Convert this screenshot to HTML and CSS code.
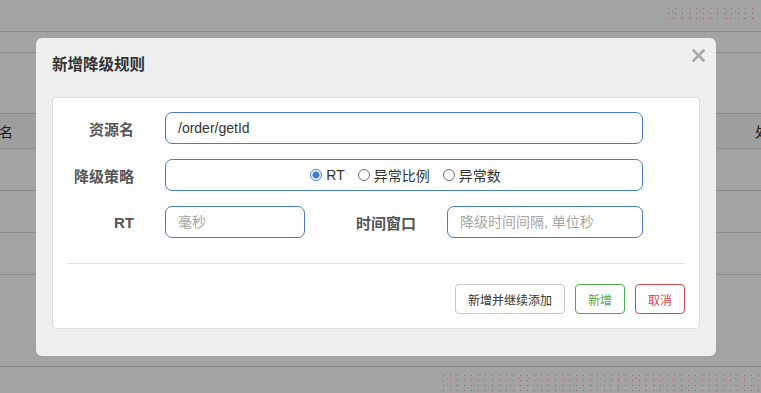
FILE: index.html
```html
<!DOCTYPE html>
<html lang="zh-CN">
<head>
<meta charset="utf-8">
<title>新增降级规则</title>
<link rel="stylesheet" href="styles.css">
</head>
<body>
<div class="page">
  <div class="bar1"><span class="wm wm-top"></span></div>
  <div class="bar2"></div>
  <div class="spacer"></div>
  <div class="thead">
    <span class="th th-first">资源名</span>
    <span class="th th-last">处理</span>
  </div>
  <div class="trow"></div>
  <div class="trow"></div>
  <div class="trow"></div>
  <div class="trow trow-tall"></div>
  <div class="footer"><span class="wm wm-bottom"></span></div>
</div>

<div class="backdrop"></div>

<div class="modal">
  <button class="close" aria-label="关闭">
    <svg width="13" height="13" viewBox="0 0 13 13"><path d="M1.5 1.5 L11.5 11.5 M11.5 1.5 L1.5 11.5" stroke="#a8a8a8" stroke-width="2.6" stroke-linecap="square" fill="none"/></svg>
  </button>
  <h3 class="title">新增降级规则</h3>
  <div class="panel">
    <div class="row">
      <label class="lbl">资源名</label>
      <div class="field field-wide"><input class="inp" type="text" value="/order/getId"></div>
    </div>
    <div class="row">
      <label class="lbl">降级策略</label>
      <div class="field field-wide radios">
        <span class="radio-item"><span class="radio checked"></span>RT</span>
        <span class="radio-item"><span class="radio"></span>异常比例</span>
        <span class="radio-item"><span class="radio"></span>异常数</span>
      </div>
    </div>
    <div class="row">
      <label class="lbl">RT</label>
      <div class="field field-short"><input class="inp" type="text" placeholder="毫秒"></div>
      <label class="lbl lbl-mid">时间窗口</label>
      <div class="field field-mid"><input class="inp" type="text" placeholder="降级时间间隔, 单位秒"></div>
    </div>
    <div class="sep"></div>
    <div class="actions">
      <button class="btn">新增并继续添加</button>
      <button class="btn btn-green">新增</button>
      <button class="btn btn-red">取消</button>
    </div>
  </div>
</div>
</body>
</html>
```

FILE: styles.css
```css
* { box-sizing: border-box; }
html, body { margin: 0; padding: 0; }
body {
  width: 761px;
  height: 393px;
  overflow: hidden;
  background: #ffffff;
  font-family: "Liberation Sans", "Noto Sans CJK SC", sans-serif;
  color: #333;
}

.page { width: 761px; }
.bar1 {
  height: 32px;
  border-bottom: 1px solid #dcdcdc;
  display: flex;
  justify-content: flex-end;
  padding: 6px 6px 0 0;
}
.bar2 { height: 21px; border-bottom: 1px solid #dcdcdc; }
.spacer { height: 60px; }
.thead {
  height: 36px;
  border-top: 1px solid #dcdcdc;
  border-bottom: 1px solid #dcdcdc;
  background: #f4f7fb;
  display: flex;
  align-items: center;
  font-size: 14px;
  font-family: "Noto Sans CJK SC", sans-serif;
  color: #333;
}
.th { white-space: nowrap; }
.th-first { margin-left: -29px; }
.th-last { margin-left: auto; width: 6px; overflow: visible; }
.trow { height: 42px; border-bottom: 1px solid #dcdcdc; }
.trow-tall { height: 92px; }
.footer {
  height: 27px;
  display: flex;
  justify-content: flex-end;
  padding-top: 6px;
}

.wm {
  display: block;
  background-image:
    radial-gradient(circle, rgba(255, 80, 80, 0.55) 0.7px, transparent 1px),
    radial-gradient(circle, rgba(255, 80, 80, 0.45) 0.7px, transparent 1px);
  background-size: 7px 5px, 9px 7px;
  background-position: 0 0, 3px 2px;
}
.wm-top { width: 90px; height: 14px; }
.wm-bottom { width: 321px; height: 18px; }

.backdrop {
  position: fixed;
  inset: 0;
  background: rgba(0, 0, 0, 0.36);
}

.modal {
  position: fixed;
  left: 36px;
  top: 38px;
  width: 680px;
  background: #efefef;
  border-radius: 6px;
  padding: 15px 16px 27px 16px;
}
.close {
  position: absolute;
  right: 11px;
  top: 11px;
  width: 13px;
  height: 13px;
  padding: 0;
  border: 0;
  background: transparent;
  display: flex;
}
.title {
  margin: 0 0 24px 0;
  font-size: 15.5px;
  line-height: 20px;
  font-weight: 700;
  color: #333;
  font-family: "Noto Sans CJK SC", sans-serif;
}

.panel {
  background: #fff;
  border: 1px solid #dcdcdc;
  border-radius: 4px;
  padding: 14px 14px 14px 14px;
  display: flex;
  flex-direction: column;
}
.row {
  display: flex;
  align-items: center;
  height: 32px;
  margin-bottom: 15px;
}
.row:nth-child(3) { margin-bottom: 0; }
.lbl {
  width: 67px;
  text-align: right;
  font-size: 15px;
  font-weight: 700;
  color: #555;
  font-family: "Liberation Sans", "Noto Sans CJK SC", sans-serif;
  margin-right: 31px;
  flex: none;
}
.lbl-mid { width: 111px; }
.field { height: 32px; flex: none; }
.field-wide { width: 478px; }
.field-short { width: 140px; }
.field-mid { width: 196px; }

.inp {
  width: 100%;
  height: 32px;
  border: 1px solid #4a7dbd;
  border-radius: 7px;
  padding: 0 12px;
  font-size: 14px;
  font-family: "Liberation Sans", "Noto Sans CJK SC", sans-serif;
  color: #333;
  outline: none;
  background: #fff;
}
.inp::placeholder { color: #a5a5a5; }

.radios {
  border: 1px solid #4a7dbd;
  border-radius: 7px;
  display: flex;
  align-items: center;
  justify-content: center;
  gap: 13px;
  font-size: 14px;
  color: #333;
  padding-left: 3px;
}
.radio-item { display: flex; align-items: center; gap: 4px; }
.radio {
  width: 12px;
  height: 12px;
  border-radius: 50%;
  border: 1px solid #6f6f6f;
  background: #fff;
  flex: none;
}
.radio.checked {
  border: 1.5px solid #3a7de0;
  background: radial-gradient(circle, #3a7de0 0 3.3px, #fff 3.8px);
}

.sep {
  height: 1px;
  background: #e3e3e3;
  margin-top: 25px;
}
.actions {
  display: flex;
  justify-content: flex-end;
  gap: 10px;
  margin-top: 20px;
}
.btn {
  height: 30px;
  padding: 0 12px;
  background: #fff;
  border: 1px solid #c8c8c8;
  border-radius: 4px;
  font-size: 12px;
  font-family: "Noto Sans CJK SC", sans-serif;
  color: #333;
}
.btn-green { border-color: #4fa94f; color: #4fa94f; }
.btn-red { border-color: #d4474b; color: #d4474b; }
```
